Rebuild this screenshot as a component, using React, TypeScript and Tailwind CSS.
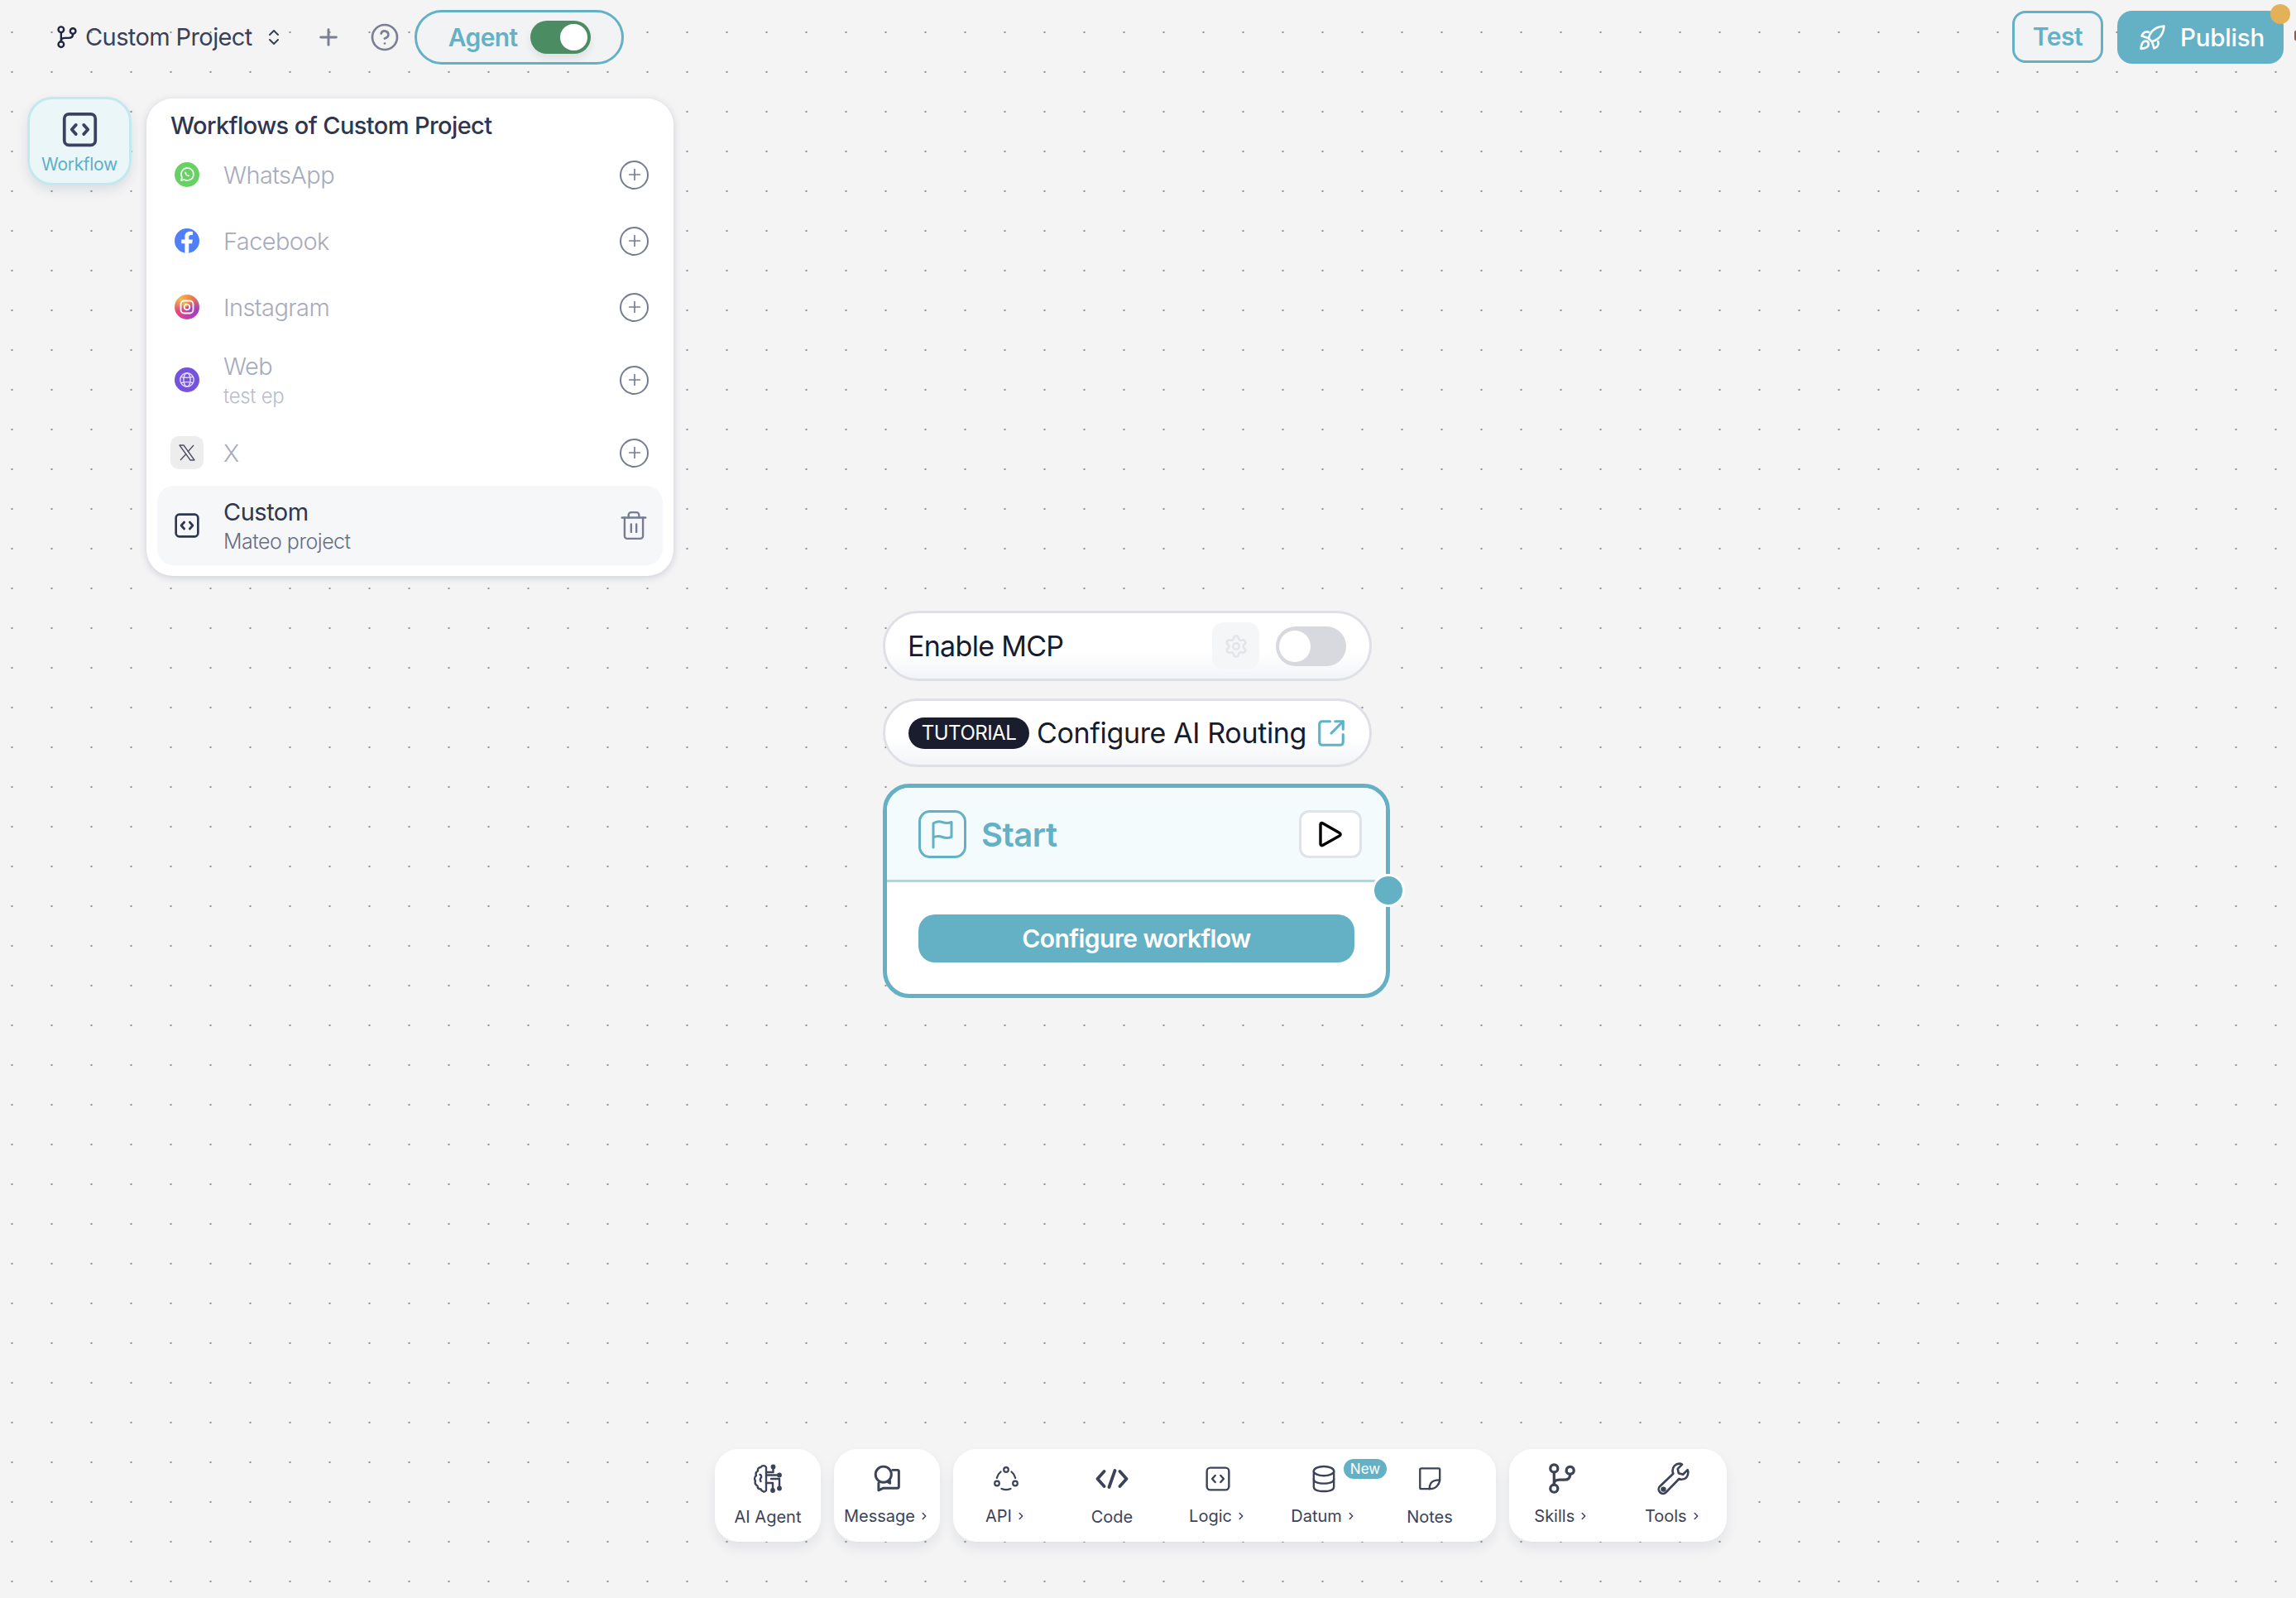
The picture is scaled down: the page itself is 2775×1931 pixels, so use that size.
import * as React from 'react';
import { ChevronsUpDown, Plus, CircleHelp, Trash2, Settings, SquareArrowOutUpRight, ChevronRight } from 'lucide-react';

const font = { fontFamily: 'Inter, "Noto Sans", sans-serif' };

const BranchIcon = ({ className }: { className?: string }) => (
  <svg viewBox="1.500 0.500 21 23.500" fill="none" stroke="currentColor" strokeWidth="2" strokeLinecap="round" className={className}>
    <circle cx="6" cy="4.500" r="2.800" />
    <circle cx="18" cy="6" r="2.800" />
    <circle cx="6" cy="19.500" r="2.800" />
    <path d="M6 7.300v9.400" />
    <path d="M18 8.800c0 2.700-1.500 4.200-4.500 4.200H10c-2.500 0-4 1-4 3" />
  </svg>
);

const CodeBox = ({ className, strokeWidth = 2 }: { className?: string; strokeWidth?: number }) => (
  <svg viewBox="0 0 24 24" fill="none" stroke="currentColor" strokeWidth={strokeWidth} strokeLinecap="round" strokeLinejoin="round" className={className}>
    <rect x="2" y="2" width="20" height="20" rx="3" />
    <path d="M9.500 9 6.800 12l2.700 3M14.500 9l2.700 3-2.700 3" />
  </svg>
);

const WhatsAppIcon = () => (
  <span className="w-[30px] h-[30px] rounded-full bg-[#67d163] flex items-center justify-center">
    <svg viewBox="0 0 24 24" className="w-[20px] h-[20px]" fill="none" stroke="#fff" strokeWidth="2">
      <path d="M3.500 20.500 4.800 16A9 9 0 1 1 8 19.200z" strokeLinejoin="round" />
      <path d="M9 8c-.8 1 0 3 1.500 4.500S14 15 15.200 14.500l.6-1.200-2-1-.8.700c-.8-.4-1.700-1.300-2-2l.6-.8-1-2z" fill="#fff" stroke="none" />
    </svg>
  </span>
);

const FacebookIcon = () => (
  <span className="w-[30px] h-[30px] rounded-full bg-[#4f80f6] overflow-hidden flex items-end justify-center">
    <svg viewBox="0 0 24 24" className="w-[30px] h-[30px]" fill="#fff">
      <path d="M13.800 24v-9.500h3.100l.6-3.700h-3.700V8.400c0-1.100.5-2 2-2h1.800V3.200c-.9-.1-1.900-.2-2.800-.2-3 0-4.900 1.800-4.900 5v2.800H6.600v3.700h3.300V24z" />
    </svg>
  </span>
);

const InstagramIcon = () => (
  <span className="w-[30px] h-[30px] rounded-full bg-[conic-gradient(from_320deg,#f0b94f,#ee7a4a,#a33ec0,#c03fae,#e54a7d,#f0b94f)] flex items-center justify-center">
    <svg viewBox="0 0 24 24" className="w-[20px] h-[20px]" fill="none" stroke="#fff" strokeWidth="2.200">
      <rect x="3" y="3" width="18" height="18" rx="5" />
      <circle cx="12" cy="12" r="4" />
    </svg>
  </span>
);

const WebIcon = () => (
  <span className="w-[30px] h-[30px] rounded-full bg-[#7653de] flex items-center justify-center">
    <svg viewBox="0 0 24 24" className="w-[22px] h-[22px]" fill="none" stroke="#e6e0fa" strokeWidth="1.500">
      <circle cx="12" cy="12" r="9" />
      <ellipse cx="12" cy="12" rx="4.500" ry="9" />
      <path d="M4 8c5 1.500 11 1.500 16 0M4 16c5-1.500 11-1.500 16 0" />
    </svg>
  </span>
);

const XIcon = () => (
  <span className="w-[40px] h-[40px] rounded-[10px] bg-[#ededed] flex items-center justify-center">
    <svg viewBox="0 0 24 24" className="w-[24px] h-[24px]" fill="none" stroke="#4a4f63" strokeWidth="1.300" strokeLinejoin="round">
      <path d="M3 3h5l13 18h-5z" />
      <path d="M20 3 13 11M11 13.500 4 21" />
    </svg>
  </span>
);

const RocketIcon = ({ className }: { className?: string }) => (
  <svg viewBox="0 0 32 32" fill="none" stroke="currentColor" strokeWidth="2.600" strokeLinecap="round" strokeLinejoin="round" className={className}>
    <path d="M29.500 2.500c-6 .3-11 2.500-14.500 6.500-2 2.300-3 5-3.500 8l3.500 3.500c3-.5 5.700-1.800 8-3.800C27 13.500 29.300 8.500 29.500 2.500z" />
    <path d="M11.500 9.500c-2.500-1-5.500 0-7 2.500l-1 2 6 2" />
    <path d="M22.500 20.500c1 2.500 0 5.500-2.500 7l-2 1-2-6" />
    <path d="M8 20c-2.500 0-5 3-5.500 9 6-.5 9-3 9-5.500S10 20 8 20z" />
  </svg>
);

const BrainIcon = ({ className }: { className?: string }) => (
  <svg viewBox="0 0 36 38" fill="none" stroke="currentColor" strokeWidth="2.400" strokeLinecap="round" strokeLinejoin="round" className={className}>
    <path d="M16 5c-1.500-2.500-5-2.500-6.500 0-2.500 0-4 2-3.500 4.500C4 10.500 3 12.500 4 15c-2 1.500-2.500 4.500-1 6.500 -1 2.500 0 5 2.500 6 0 2.500 1.500 4 4 4 1 3 5 4 6.500 1.500V5z" />
    <path d="M8.500 14c1.500.5 2 2 1.500 3.500-1.500 1-1.500 3-.5 4.500" />
    <circle cx="24.500" cy="4.500" r="1.700" fill="currentColor" />
    <circle cx="32" cy="14.500" r="1.700" fill="currentColor" />
    <circle cx="32" cy="30.500" r="1.700" fill="currentColor" />
    <circle cx="24" cy="33" r="1.700" fill="currentColor" />
    <path d="M24.500 6v5H16M16 14.500h14.500M22 19h10v10M16 24h8v7" />
  </svg>
);

const MessageIcon = ({ className }: { className?: string }) => (
  <svg viewBox="0 0 32 32" fill="none" stroke="currentColor" strokeWidth="2.800" strokeLinecap="round" strokeLinejoin="round" className={className}>
    <circle cx="12" cy="11" r="9" />
    <path d="M16 19l3.500 2-.5-4" />
    <path d="M22.500 6H28c.8 0 1.500.7 1.500 1.500V25c0 .8-.7 1.500-1.500 1.500H12L6.500 29v-8" />
  </svg>
);

const ApiIcon = ({ className }: { className?: string }) => (
  <svg viewBox="0 0 32 32" fill="none" stroke="currentColor" strokeWidth="2.200" strokeLinecap="round" className={className}>
    <circle cx="16" cy="5" r="2.800" />
    <circle cx="5" cy="21.500" r="2.800" />
    <circle cx="27" cy="21.500" r="2.800" />
    <path d="M9.500 7.500C7 9.500 5.500 12 4.800 15M22.500 7.500c2.500 2 4 4.500 4.700 7.500M10.500 28c3.500 1.500 7.500 1.500 11 0" />
  </svg>
);

const TagIcon = ({ className }: { className?: string }) => (
  <svg viewBox="0 0 40 24" fill="none" stroke="currentColor" strokeWidth="3.800" strokeLinecap="round" strokeLinejoin="round" className={className}>
    <path d="M10.500 3 2.500 12l8 9M29.500 3l8 9-8 9M23.500 2l-7 20" />
  </svg>
);

const DataIcon = ({ className }: { className?: string }) => (
  <svg viewBox="0 0 32 36" fill="none" stroke="currentColor" strokeWidth="2.500" strokeLinecap="round" strokeLinejoin="round" className={className}>
    <ellipse cx="16" cy="8" rx="13" ry="6" />
    <path d="M3 8v20c0 3.500 4 6 13 6s13-2.500 13-6V8" />
    <path d="M3 18c0 3.500 4 6 13 6s13-2.500 13-6" />
  </svg>
);

const NoteIcon = ({ className }: { className?: string }) => (
  <svg viewBox="0 0 32 32" fill="none" stroke="currentColor" strokeWidth="2.500" strokeLinecap="round" strokeLinejoin="round" className={className}>
    <path d="M5.500 2.500h22c1 0 1.500.5 1.500 1.500v12c0 7-5 13-12 13H5c-1 0-1.500-.5-1.500-1.500V4c0-1 .5-1.500 2-1.500z" />
    <path d="M16 29c-.5-2 0-5 1.500-7.500 2-2.500 5-4 11.500-4" />
  </svg>
);

const WrenchIcon = ({ className }: { className?: string }) => (
  <svg viewBox="0 0 38 40" fill="none" stroke="currentColor" strokeWidth="2.500" strokeLinecap="round" strokeLinejoin="round" className={className}>
    <path d="M26.500 2.500c-4.500 0-8 3.500-8 8 0 1.500.3 2.500.8 3.500L4 28.500c-2 2-2 5 0 7s5 2 7 0l15-15.500c1 .5 2 .7 3 .7 4.500 0 7.500-3.500 7.500-8 0-1.200-.2-2-.7-3l-5.300 5.300-5-1.500-1-5 5-5c-1-.7-1.900-1-3-1z" />
    <circle cx="8" cy="32" r="1.800" fill="currentColor" />
  </svg>
);

const FlagIcon = ({ className }: { className?: string }) => (
  <svg viewBox="0 0 28 36" fill="none" stroke="currentColor" strokeWidth="3" strokeLinecap="round" strokeLinejoin="round" className={className}>
    <path d="M3 34V5c4-3 7-3 11-1.500s7 1.500 11 0v18c-4 1.500-7 1.500-11 0s-7-1.500-11 .5" />
  </svg>
);

const PlayIcon = ({ className }: { className?: string }) => (
  <svg viewBox="0 0 30 32" fill="none" stroke="currentColor" strokeWidth="3.400" strokeLinejoin="round" className={className}>
    <path d="M3 4c0-1.500 1.500-2 2.500-1.300L26 14.500c1.500 1 1.500 2.500 0 3.500L5.500 29.500C4.500 30 3 29.500 3 28z" />
  </svg>
);

const channels = [
  { name: 'WhatsApp', icon: <WhatsAppIcon /> },
  { name: 'Facebook', icon: <FacebookIcon /> },
  { name: 'Instagram', icon: <InstagramIcon /> },
  { name: 'Web', sub: 'test ep', icon: <WebIcon /> },
  { name: 'X', icon: <XIcon /> },
];

const ToolbarItem = ({ icon, label, arrow, width = 'w-[128px]' }: { icon: React.ReactNode; label: string; arrow?: boolean; width?: string }) => (
  <div className={`${width} h-full flex flex-col items-center pt-[14px]`}>
    <div className="h-[44px] flex items-center justify-center text-[#3c4359]">{icon}</div>
    <div className={`${arrow ? 'mt-[9px]' : 'mt-[10px]'} flex items-center gap-[4px] text-[20px] leading-[28px] text-[#3c4359]`}>
      {label}
      {arrow && <ChevronRight className="w-[14px] h-[14px]" strokeWidth={2.500} />}
    </div>
  </div>
);

export default function App() {
  return (
    <div
      style={font}
      className="relative w-[2775px] h-[1931px] overflow-hidden flex flex-col bg-[#f4f4f5] bg-[radial-gradient(circle,#8f939b_1.100px,transparent_1.600px)] bg-[size:48px_48px] bg-[position:-9.500px_15px]"
    >
      <header className="h-[90px] shrink-0 flex items-start justify-between pt-[12px] pl-[68px] pr-[15px]">
        <div className="flex items-center h-[66px]">
          <BranchIcon className="w-[26px] h-[28px] text-[#1f2640]" />
          <span className="ml-[9px] text-[29px] tracking-[-0.6px] text-[#3a4157]">Custom Project</span>
          <ChevronsUpDown className="ml-[14px] w-[24px] h-[30px] text-[#3a4157]" strokeWidth={2} />
          <Plus className="ml-[38px] w-[32px] h-[32px] text-[#7a7f95]" strokeWidth={2.200} />
          <CircleHelp className="ml-[34px] w-[36px] h-[36px] text-[#7a7f95]" strokeWidth={1.800} />
          <div className="ml-[18px] w-[253px] h-[66px] rounded-full border-[3px] border-[#64b1c6] bg-[#f2f3f5] flex items-center pl-[38px]">
            <span className="text-[30px] font-semibold tracking-[-0.6px] text-[#64b1c6]">Agent</span>
            <span className="ml-[15px] w-[73px] h-[40px] rounded-full bg-[#4c8c63] flex items-center justify-end pr-[4px] shadow-[0_6px_10px_rgba(0,0,0,0.08)]">
              <span className="w-[33px] h-[32px] rounded-full bg-white" />
            </span>
          </div>
        </div>
        <div className="flex items-start">
          <button className="w-[110px] h-[63px] mt-[1px] rounded-[16px] border-[3px] border-[#64b1c6] bg-[#f2f3f5] text-[30px] font-semibold text-[#64b1c6] tracking-[-0.5px]">Test</button>
          <div className="relative ml-[17px]">
            <button className="w-[201px] h-[64px] mt-[1px] rounded-[18px] bg-[#64b1c6] flex items-center pl-[26px] text-white">
              <RocketIcon className="w-[33px] h-[33px]" />
              <span className="ml-[17px] text-[29.5px] font-medium tracking-[-0.2px]">Publish</span>
            </button>
            <span className="absolute -top-[7px] -right-[8px] w-[24px] h-[24px] rounded-full bg-[#e2b158]" />
          </div>
        </div>
      </header>
      <span className="absolute right-0 top-[37px] w-[2px] h-[12px] rounded-l-full bg-[#8a5a4a]" />

      <div className="flex items-start pl-[33px] mt-[29px] shrink-0">
        <div className="w-[126px] h-[107px] mt-[-2px] rounded-[30px] border-[3px] border-[#c3e9f0] bg-[#ebf6f9] shadow-[0_6px_14px_rgba(30,40,70,0.10)] flex flex-col items-center pt-[14px]">
          <CodeBox className="w-[45px] h-[45px] text-[#3a4260]" />
          <span className="mt-[6px] text-[21px] leading-[28px] text-[#5cb0c6] tracking-[-0.3px]">Workflow</span>
        </div>
        <div className="ml-[18px] w-[637px] h-[577px] rounded-[32px] bg-white shadow-[0_2px_10px_rgba(30,40,70,0.18)] px-[13px]">
          <h2 className="pl-[16px] pt-[14px] h-[52px] text-[29px] leading-[38px] font-medium tracking-[-0.6px] text-[#2f3650]">Workflows of Custom Project</h2>
          <div className="flex flex-col">
            {channels.map(c => (
              <div key={c.name} className={`${c.sub ? 'h-[96px]' : 'h-[80px]'} flex items-center`}>
                <span className={`w-[80px] shrink-0 flex ${c.name === 'X' ? 'pl-[16px]' : 'pl-[21px]'}`}>{c.icon}</span>
                <div className={`flex-1 ${c.sub ? '' : 'pt-[2px]'}`}>
                  <div className="text-[29px] leading-[36px] tracking-[-0.6px] font-light text-[#a6abbd]">{c.name}</div>
                  {c.sub && <div className="mt-[3px] text-[24px] leading-[30px] tracking-[-0.3px] font-light text-[#b8bdcb]">{c.sub}</div>}
                </div>
                <span className="w-[35px] h-[35px] mr-[17px] rounded-full border-[2px] border-[#767c93] flex items-center justify-center">
                  <Plus className="w-[22px] h-[22px] text-[#767c93]" strokeWidth={1.800} />
                </span>
              </div>
            ))}
          </div>
          <div className="h-[96px] rounded-[20px] bg-[#f6f7f9] flex items-center">
            <span className="w-[80px] pl-[20px] shrink-0">
              <CodeBox className="w-[32px] h-[32px] text-[#2f3650]" />
            </span>
            <div className="flex-1 pt-[2px]">
              <div className="text-[29px] leading-[36px] tracking-[-0.5px] text-[#2f3650]">Custom</div>
              <div className="text-[25px] leading-[34px] tracking-[-0.5px] font-light text-[#666d85]">Mateo project</div>
            </div>
            <Trash2 className="w-[38px] h-[38px] mr-[16px] text-[#767c93]" strokeWidth={1.500} />
          </div>
        </div>
      </div>

      <div className="ml-[1067px] mt-[42px] w-[628px] shrink-0 flex flex-col">
        <div className="w-[591px] h-[85px] rounded-full border-[3px] border-[#dfe0e5] bg-[linear-gradient(180deg,#ffffff_60%,#f2f4f8_100%)] flex items-center pl-[27px]">
          <span className="text-[34px] tracking-[-0.7px] text-[#161b2d]">Enable MCP</span>
          <span className="ml-auto w-[57px] h-[57px] rounded-[14px] bg-[#f5f6f7] flex items-center justify-center">
            <Settings className="w-[30px] h-[30px] text-[#e3e4e7]" strokeWidth={2} />
          </span>
          <span className="ml-[20px] mr-[28px] w-[85px] h-[48px] rounded-full bg-[#d8d9de] flex items-center pl-[4px]">
            <span className="w-[38px] h-[38px] rounded-full bg-white" />
          </span>
        </div>
        <div className="mt-[21px] w-[591px] h-[83px] rounded-full border-[3px] border-[#dfe0e5] bg-[linear-gradient(180deg,#ffffff_60%,#f2f4f8_100%)] flex items-center pl-[28px]">
          <span className="w-[146px] h-[38px] rounded-full bg-[#1a1d2e] text-white text-[24px] tracking-[-0.5px] flex items-center justify-center">TUTORIAL</span>
          <span className="ml-[9px] text-[34px] tracking-[-0.35px] text-[#161b2d]">Configure AI Routing</span>
          <SquareArrowOutUpRight className="ml-[11px] w-[38px] h-[38px] text-[#5fb2c8]" strokeWidth={2} />
        </div>
        <div className="relative mt-[20px] w-[613px] h-[259px] rounded-[32px] border-[5px] border-[#64b1c6] bg-white">
          <div className="h-[114px] rounded-t-[27px] bg-[#f3fbfd] border-b-[3px] border-[#a5d9e6] flex items-center pl-[38px] pr-[29px]">
            <span className="w-[58px] h-[58px] rounded-[14px] border-[3px] border-[#64b1c6] flex items-center justify-center">
              <FlagIcon className="w-[28px] h-[36px] text-[#64b1c6]" />
            </span>
            <span className="ml-[18px] mt-[2px] text-[40px] font-semibold tracking-[-0.5px] text-[#64b1c6]">Start</span>
            <span className="ml-auto w-[76px] h-[58px] rounded-[12px] border-[3px] border-[#e2e3e8] bg-white flex items-center justify-center">
              <PlayIcon className="w-[30px] h-[32px] text-black" />
            </span>
          </div>
          <div className="px-[38px] pt-[39px]">
            <button className="w-[527px] h-[58px] rounded-[20px] bg-[#64b1c6] text-white text-[30px] font-semibold tracking-[-0.6px]">Configure workflow</button>
          </div>
          <span className="absolute top-[104px] -right-[23px] w-[40px] h-[40px] rounded-full bg-[#64b1c6] border-[3px] border-white" />
        </div>
      </div>

      <div className="mt-auto mb-[68px] ml-[864px] h-[112px] flex gap-[16px] shrink-0">
        <div className="w-[128px] rounded-[28px] bg-white shadow-[0_8px_14px_rgba(30,40,70,0.08)]">
          <ToolbarItem icon={<BrainIcon className="w-[36px] h-[38px]" />} label="AI Agent" />
        </div>
        <div className="w-[128px] rounded-[28px] bg-white shadow-[0_8px_14px_rgba(30,40,70,0.08)]">
          <ToolbarItem icon={<MessageIcon className="w-[34px] h-[34px]" />} label="Message" arrow />
        </div>
        <div className="w-[656px] rounded-[28px] bg-white shadow-[0_8px_14px_rgba(30,40,70,0.08)] flex pr-[16px]">
          <ToolbarItem icon={<ApiIcon className="w-[32px] h-[32px]" />} label="API" arrow />
          <ToolbarItem icon={<TagIcon className="w-[40px] h-[24px]" />} label="Code" />
          <ToolbarItem icon={<CodeBox className="w-[32px] h-[32px]" strokeWidth={1.800} />} label="Logic" arrow />
          <div className="relative">
            <ToolbarItem icon={<DataIcon className="w-[30px] h-[34px]" />} label="Datum" arrow />
            <span className="absolute top-[12px] left-[88px] w-[52px] h-[24px] rounded-full bg-[#64b1c6] text-white text-[17px] leading-[24px] text-center">New</span>
          </div>
          <ToolbarItem icon={<NoteIcon className="w-[30px] h-[30px]" />} label="Notes" />
        </div>
        <div className="w-[263px] rounded-[28px] bg-white shadow-[0_8px_14px_rgba(30,40,70,0.08)] flex">
          <ToolbarItem icon={<BranchIcon className="w-[34px] h-[38px]" />} label="Skills" arrow />
          <ToolbarItem icon={<WrenchIcon className="w-[42px] h-[42px]" />} label="Tools" arrow width="w-[130px] ml-[6px]" />
        </div>
      </div>
    </div>
  );
}
